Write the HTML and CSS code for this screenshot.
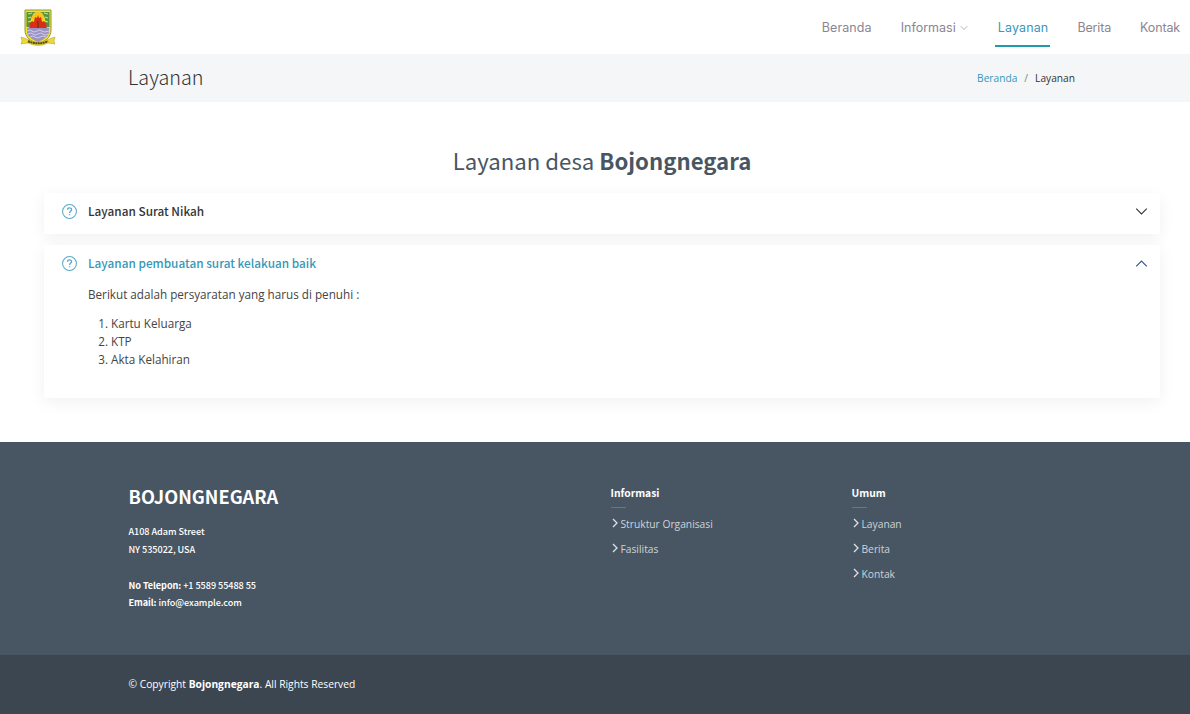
FILE: index.html
```html
<!DOCTYPE html>
<html lang="id">
<head>
<meta charset="utf-8">
<title>Layanan - Bojongnegara</title>
<link rel="stylesheet" href="styles.css">
</head>
<body>
<header class="header">
  <a class="logo" href="#" aria-label="Bojongnegara">
    <svg width="36" height="38" viewBox="0 0 36 38">
      <path d="M5 1h26v20c0 7-5 11-13 14C10 32 5 28 5 21z" fill="#f4e51c" stroke="#8d9450" stroke-width="1"/>
      <path d="M6.500 3h10l-5 5-2 10H6.500zM29.500 3h-10l5 5 2 10h3z" fill="#519448"/>
      <path d="M8 5l4-1M8 9l3-1M8 13l3-1M28 5l-4-1M28 9l-3-1M28 13l-3-1" stroke="#e9df48" stroke-width="1.2"/>
      <circle cx="18" cy="8.500" r="6" fill="#f6c61c"/>
      <path d="M9 20l1-6 2-2 2 1 1-5 2 1 1-3 1 3 2-1 1 5 2-1 2 2 1 6z" fill="#d92d15"/>
      <path d="M17 12h2v7h-2z" fill="#8f341b"/>
      <path d="M7 19h22v3c0 5-4 8-11 11C11 30 7 27 7 22z" fill="#9a93c4"/>
      <path d="M7 22q3-2 5 0t5 0 5 0 7 0M8 25q3-2 5 0t5 0 5 0 5 0M10 28q3-2 5 0t5 0 6 0" fill="none" stroke="#d8d3ee" stroke-width=".9"/>
      <path d="M1 28l6 2q11 6 22 0l6-2-1 4 1 3-7-1q-10 5-20 0l-7 1 1-3z" fill="#eed832" stroke="#ad9c35" stroke-width=".5"/>
      <path d="M8 32.300q10 4 20 0" fill="none" stroke="#504819" stroke-width="2" stroke-dasharray="2 .5"/>
    </svg>
  </a>
  <nav class="nav">
    <a class="nav-link n-beranda" href="#">Beranda</a>
    <a class="nav-link n-informasi" href="#"><span>Informasi</span><svg class="nav-chev" width="8" height="8" viewBox="0 0 16 16"><path d="M1.500 4.500L8 11l6.500-6.500"/></svg></a>
    <a class="nav-link n-layanan active" href="#">Layanan</a>
    <a class="nav-link n-berita" href="#">Berita</a>
    <a class="nav-link n-kontak" href="#">Kontak</a>
  </nav>
</header>
<section class="banner">
  <h2 class="banner-title">Layanan</h2>
  <div class="crumbs"><a href="#">Beranda</a><span class="sep">/</span><span>Layanan</span></div>
</section>
<main class="main">
  <h2 class="title">Layanan desa <strong>Bojongnegara</strong></h2>
  <section class="card">
    <div class="question">
      <svg class="help" width="15" height="15" viewBox="0 0 16 16"><circle cx="8" cy="8" r="7.400"/><path class="mark" d="M5.900 6.100C5.900 3.500 10.200 3.500 10.200 6.100C10.200 7.500 8.100 7.700 8.100 9.700M8.100 10.800v1.300"/></svg>
      <span class="q1">Layanan Surat Nikah</span>
      <svg class="chev" width="13" height="13" viewBox="0 0 16 16"><path d="M1.500 4.500L8 11l6.500-6.500"/></svg>
    </div>
  </section>
  <section class="card card-open">
    <div class="question open">
      <svg class="help" width="15" height="15" viewBox="0 0 16 16"><circle cx="8" cy="8" r="7.400"/><path class="mark" d="M5.900 6.100C5.900 3.500 10.200 3.500 10.200 6.100C10.200 7.500 8.100 7.700 8.100 9.700M8.100 10.800v1.300"/></svg>
      <span class="q2">Layanan pembuatan surat kelakuan baik</span>
      <svg class="chev" width="13" height="13" viewBox="0 0 16 16"><path d="M1.500 11.500L8 5l6.500 6.500"/></svg>
    </div>
    <div class="answer">
      <p>Berikut adalah persyaratan yang harus di penuhi :</p>
      <ol><li>Kartu Keluarga</li><li>KTP</li><li>Akta Kelahiran</li></ol>
    </div>
  </section>
</main>
<footer class="footer">
  <div class="footer-top">
    <div class="contact">
      <h3>BOJONGNEGARA</h3>
      <p>A108 Adam Street<br>NY 535022, USA<br><br><strong>No Telepon:</strong> +1 5589 55488 55<br><strong>Email:</strong> info@example.com</p>
    </div>
    <div class="links">
      <h4>Informasi</h4>
      <ul>
        <li><svg width="8" height="10" viewBox="0 0 8 10"><path d="M2 1l4 4-4 4"/></svg><a href="#">Struktur Organisasi</a></li>
        <li><svg width="8" height="10" viewBox="0 0 8 10"><path d="M2 1l4 4-4 4"/></svg><a href="#">Fasilitas</a></li>
      </ul>
    </div>
    <div class="links">
      <h4>Umum</h4>
      <ul>
        <li><svg width="8" height="10" viewBox="0 0 8 10"><path d="M2 1l4 4-4 4"/></svg><a href="#">Layanan</a></li>
        <li><svg width="8" height="10" viewBox="0 0 8 10"><path d="M2 1l4 4-4 4"/></svg><a href="#">Berita</a></li>
        <li><svg width="8" height="10" viewBox="0 0 8 10"><path d="M2 1l4 4-4 4"/></svg><a href="#">Kontak</a></li>
      </ul>
    </div>
  </div>
  <div class="copyright">© Copyright <strong>Bojongnegara</strong>. All Rights Reserved</div>
</footer>
</body>
</html>
```
FILE: styles.css
```css
* { box-sizing: border-box; }
body {
  margin: 0;
  font-family: "Open Sans", sans-serif;
  color: #444;
  background: #fff;
}
h2, h3, h4, p, ul, ol { margin: 0; padding: 0; }
a { color: inherit; text-decoration: none; }
svg { display: block; flex: none; }

.header {
  display: flex;
  align-items: center;
  justify-content: space-between;
  height: 54px;
  padding: 0 10px 0 20px;
}
.logo { padding-top: 2px; }
.nav { display: flex; gap: 29px; font: 12.5px/20px Inter, sans-serif; color: #8b8591; }
.nav-link { display: flex; align-items: center; gap: 4px; height: 40px; padding-top: 4px; border-bottom: 2px solid transparent; white-space: nowrap; }
.nav-link.active {
  color: #3c96b8;
  border-color: #1f9bab;
  padding: 4px 2px 0 3px;
  margin: 0 -2px;
}
.n-beranda { letter-spacing: 0.1px; }
.n-layanan { letter-spacing: 0.15px; }
.n-berita, .n-kontak { letter-spacing: -0.15px; }
.nav-chev { stroke: #9b96a0; stroke-width: 1.5; fill: none; }

.banner {
  display: flex;
  align-items: center;
  justify-content: space-between;
  height: 48px;
  padding: 0 115px 0 128px;
  background: #f4f6f8;
}
.banner-title { margin-top: -2px; font: 300 19.8px/30px "Noto Sans CJK SC", sans-serif; color: #333; }
.crumbs { display: flex; font-size: 10.200px; line-height: 16px; color: #333; }
.crumbs a { color: #3498b8; }
.sep { padding: 0 7px; color: #7b8288; }

.main { height: 340px; padding: 40px 30px 0 44px; }
.title {
  font: 400 22.200px/36px "Noto Sans CJK SC", sans-serif;
  text-align: center;
  color: #485664;
}
.title strong { font-weight: 700; }
.card {
  height: 41px;
  margin-top: 15px;
  background: #fff;
  box-shadow: 0 4px 16px rgba(0, 0, 0, 0.06);
}
.card-open { height: 153px; margin-top: 11px; }
.question {
  display: flex;
  align-items: center;
  height: 37px;
  padding: 0 12px 0 18px;
  font: 500 11.800px/20px "Noto Sans CJK SC", sans-serif;
  color: #333;
}
.question span { flex: 1; margin: -1px 0 0 11px; }
.question.open { color: #3498b8; }
.help { fill: none; stroke: #5aa9c8; stroke-width: 1.1; }
.help .mark { stroke-width: 1.4; }
.chev { fill: none; stroke: #333; stroke-width: 1.3; }
.open .chev { stroke: #34508a; }
.answer { padding: 3px 0 0 44px; font-size: 11.700px; line-height: 18px; }
.answer ol { margin-top: 11px; padding-left: 23px; }

.footer { color: #fff; background: #485663; }
.footer-top { display: grid; grid-template-columns: 482px 241px 1fr; height: 213px; padding: 42px 0 0 128.500px; }
.contact { font-family: "Noto Sans CJK SC", sans-serif; }
.contact h3 { font-size: 18.200px; line-height: 24px; font-weight: 700; }
.contact p { margin-top: 15.400px; font-size: 9.100px; letter-spacing: -0.050px; font-weight: 500; line-height: 17.700px; }
.links h4 { position: relative; font: 700 10.300px/17px "Noto Sans CJK SC", sans-serif; padding-bottom: 7px; }
.links h4::after { content: ""; position: absolute; left: 0; bottom: 0; width: 15px; height: 1px; background: #1598b2; }
.links ul { list-style: none; margin-top: 3.500px; }
.links li { display: flex; align-items: center; gap: 2px; height: 25.200px; font-size: 10.250px; color: #ccd3d9; }
.links svg { margin-top: -2px; fill: none; stroke: #dde2e6; stroke-width: 1.3; }
.copyright { height: 59px; padding: 20px 0 0 128.500px; font-size: 10.250px; line-height: 18px; background: #3b4651; }
```
